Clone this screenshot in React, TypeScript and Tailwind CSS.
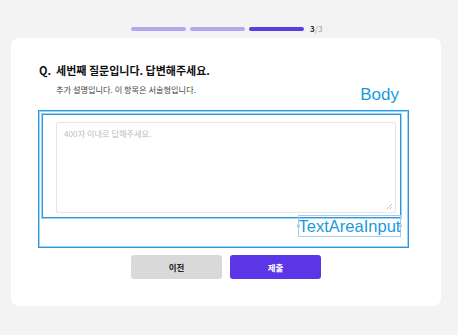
import React from 'react';

const KR = { fontFamily: '"Noto Sans CJK KR", "Noto Sans", sans-serif' };

const ProgressBar: React.FC<{ step: number; total: number }> = ({ step, total }) => (
  <div className="flex items-center pl-[131px] pt-[19px] h-[38px]">
    <div className="flex gap-[4px]">
      {Array.from({ length: total }).map((_, i) => (
        <div
          key={i}
          className={`w-[55px] h-[4px] rounded-full ${i + 1 === step ? 'bg-[#5b3ee0]' : 'bg-[#b4a6f3]'}`}
        />
      ))}
    </div>
    <span className="ml-[6px] text-[8px] font-bold text-[#333] leading-none" style={KR}>
      {step}
      <span className="font-normal text-[#999]">/{total}</span>
    </span>
  </div>
);

export default function App() {
  return (
    <div className="w-[458px] h-[335px] bg-[#f2f3f2] overflow-hidden" style={KR}>
      <ProgressBar step={3} total={3} />

      <div className="ml-[11px] w-[430px] h-[268px] bg-white rounded-[8px] pl-[27px] pr-[32px] pt-[24px] flex flex-col">
        <h2 className="text-[11px] leading-[16px] font-bold text-[#111] pl-[1px]">
          Q.&nbsp; 세번째 질문입니다. 답변해주세요.
        </h2>
        <p className="mt-[5px] pl-[18px] text-[8.2px] leading-[12px] text-[#444]">
          추가 설명입니다. 이 항목은 서술형입니다.
        </p>

        {/* Body overlay */}
        <div className="relative mt-[15px] h-[138px] border border-[#3a8fd6] shadow-[inset_0_0_0_1px_#8fdcf7] p-[3px]">
          <span
            className="absolute -top-[26px] right-[9px] text-[17px] leading-[20px] text-[#1b9ae0]"
            style={{ fontFamily: '"Liberation Sans", Arial, sans-serif' }}
          >
            Body
          </span>

          {/* TextAreaInput overlay */}
          <div className="relative h-[104px] mr-[4px] border border-[#3a8fd6] shadow-[0_0_0_1px_#8fdcf7] pl-[13px] pr-[4px] pt-[7px] pb-[4px]">
            <div className="relative h-full border border-[#e6e6e6] rounded-[2px] px-[7px] pt-[4px] text-[8.2px] leading-[12px] text-[#bdbdbd]">
              400자 이내로 답해주세요.
              <svg className="absolute right-[2px] bottom-[2px]" width="7" height="7" viewBox="0 0 7 7">
                <path d="M6 1L1 6M6 4L4 6" stroke="#b8b8b8" strokeWidth="0.8" />
              </svg>
            </div>
            <div className="absolute right-[-1px] top-[100px] w-[103px] h-[22px] border border-[#a8cdea] flex items-center justify-center">
              <span
                className="text-[16.5px] leading-none text-[#1b9ae0]"
                style={{ fontFamily: '"Liberation Sans", Arial, sans-serif' }}
              >
                TextAreaInput
              </span>
              <span className="absolute -left-[2px] top-1/2 -translate-y-1/2 w-[3px] h-[3px] bg-white border border-[#a8cdea]" />
              <span className="absolute -right-[2px] top-1/2 -translate-y-1/2 w-[3px] h-[3px] bg-white border border-[#a8cdea]" />
            </div>
          </div>
        </div>

        <div className="flex justify-center gap-[8px] mt-[7px] pl-[5px]">
          <button className="w-[91px] h-[24px] rounded-[3px] bg-[#d9d9d9] text-[8.5px] font-bold text-[#222]">
            이전
          </button>
          <button className="w-[91px] h-[24px] rounded-[3px] bg-[#5b35e6] text-[8.5px] font-bold text-white">
            제출
          </button>
        </div>
      </div>
    </div>
  );
}
